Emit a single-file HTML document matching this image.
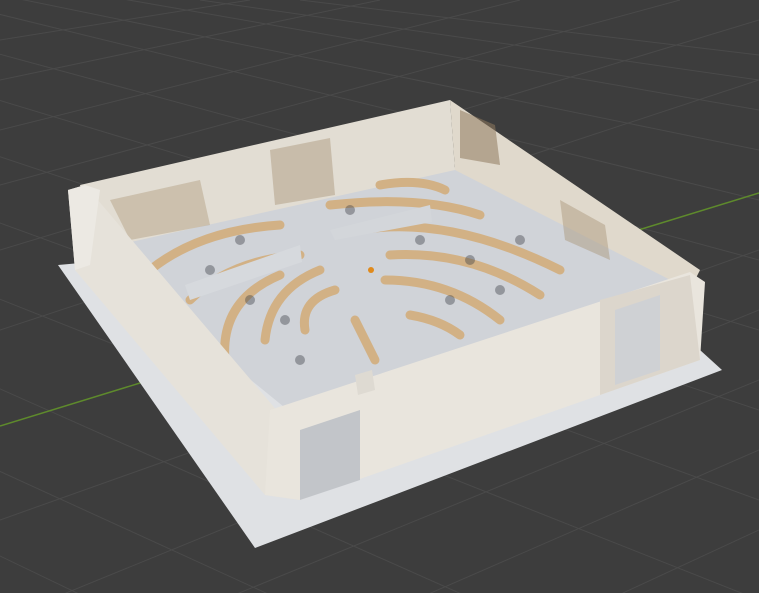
<!DOCTYPE html>
<html><head><style>
html,body{margin:0;padding:0;background:#3d3d3d;width:759px;height:593px;overflow:hidden}
svg{display:block}
</style></head><body>
<svg width="759" height="593" viewBox="0 0 759 593" xmlns="http://www.w3.org/2000/svg">
<rect width="759" height="593" fill="#3d3d3d"/>
<g stroke="#4a4a4a" stroke-width="1">
<line x1="-200" y1="40" x2="759" y2="330"/>
<line x1="-200" y1="0" x2="759" y2="260"/>
<line x1="-100" y1="-10" x2="759" y2="200"/>
<line x1="0" y1="-5" x2="759" y2="150"/>
<line x1="100" y1="-5" x2="759" y2="110"/>
<line x1="200" y1="0" x2="759" y2="80"/>
<line x1="300" y1="0" x2="759" y2="55"/>
<line x1="-200" y1="90" x2="759" y2="410"/>
<line x1="-200" y1="150" x2="759" y2="500"/>
<line x1="-200" y1="220" x2="759" y2="600"/>
<line x1="-200" y1="300" x2="700" y2="700"/>
<line x1="-200" y1="380" x2="500" y2="700"/>
<line x1="-200" y1="460" x2="300" y2="700"/>
<line x1="0" y1="80" x2="380" y2="0"/>
<line x1="0" y1="130" x2="520" y2="0"/>
<line x1="0" y1="185" x2="680" y2="0"/>
<line x1="0" y1="250" x2="759" y2="20"/>
<line x1="0" y1="330" x2="759" y2="80"/>
<line x1="0" y1="520" x2="759" y2="250"/>
<line x1="0" y1="620" x2="759" y2="310"/>
<line x1="100" y1="650" x2="759" y2="380"/>
<line x1="300" y1="650" x2="759" y2="450"/>
<line x1="500" y1="650" x2="759" y2="530"/>
<line x1="0" y1="40" x2="250" y2="0"/>
</g>
<line x1="0" y1="426" x2="759" y2="193" stroke="#5e8a2c" stroke-width="1.5"/>
<polygon points="58,265 255,548 722,370 700,350 450,230" fill="#dfe1e4"/>
<polygon points="85,245 450,165 690,280 300,420" fill="#d0d3d8"/>
<polygon points="80,185 450,100 455,170 95,250" fill="#e2ddd3"/>
<polygon points="110,200 200,180 210,225 130,240" fill="#b5a488" opacity="0.5"/>
<polygon points="270,150 330,138 335,195 275,205" fill="#a89478" opacity="0.45"/>
<polygon points="450,100 700,270 690,290 455,170" fill="#e0d9cc"/>
<polygon points="460,110 495,125 500,165 460,158" fill="#8f7a5e" opacity="0.55"/>
<polygon points="560,200 605,225 610,260 565,240" fill="#a89478" opacity="0.45"/>
<g fill="none" stroke="#d2b185" stroke-width="9" stroke-linecap="round">
<path d="M150,270 Q200,230 280,225"/>
<path d="M190,300 Q230,260 300,255"/>
<path d="M225,360 Q220,300 280,275"/>
<path d="M265,340 Q270,290 320,270"/>
<path d="M305,330 Q300,300 335,290"/>
<path d="M330,205 Q420,195 480,215"/>
<path d="M360,230 Q450,215 560,270"/>
<path d="M390,255 Q470,250 540,295"/>
<path d="M385,280 Q450,280 500,320"/>
<path d="M410,315 Q440,320 460,335"/>
<path d="M355,320 L375,360"/>
<path d="M380,185 Q420,178 445,190"/>
</g>
<g fill="#3a3d44" opacity="0.4">
<circle cx="240" cy="240" r="5"/><circle cx="210" cy="270" r="5"/><circle cx="250" cy="300" r="5"/>
<circle cx="285" cy="320" r="5"/><circle cx="300" cy="360" r="5"/><circle cx="240" cy="380" r="5"/>
<circle cx="420" cy="240" r="5"/><circle cx="470" cy="260" r="5"/><circle cx="500" cy="290" r="5"/>
<circle cx="450" cy="300" r="5"/><circle cx="350" cy="210" r="5"/><circle cx="520" cy="240" r="5"/>
</g>
<polygon points="185,285 300,245 302,262 190,300" fill="#d6d9dd"/>
<polygon points="330,230 430,205 432,222 335,240" fill="#d3d6da"/>
<polygon points="68,190 85,185 285,420 300,500 265,495 75,270" fill="#e6e2da"/>
<polygon points="68,190 85,185 100,190 90,265 75,270" fill="#ece9e3"/>
<polygon points="270,410 690,272 705,282 700,360 300,500 265,495" fill="#e9e5dd"/>
<polygon points="600,300 690,275 700,360 600,395" fill="#dcd6cc"/>
<polygon points="300,430 360,410 360,480 300,500" fill="#c2c5c9"/>
<polygon points="615,310 660,295 660,370 615,385" fill="#cfd1d4"/>
<polygon points="355,375 372,370 375,390 358,395" fill="#dedad2"/>
<circle cx="371" cy="270" r="3" fill="#e08a1c"/>
</svg>
</body></html>
